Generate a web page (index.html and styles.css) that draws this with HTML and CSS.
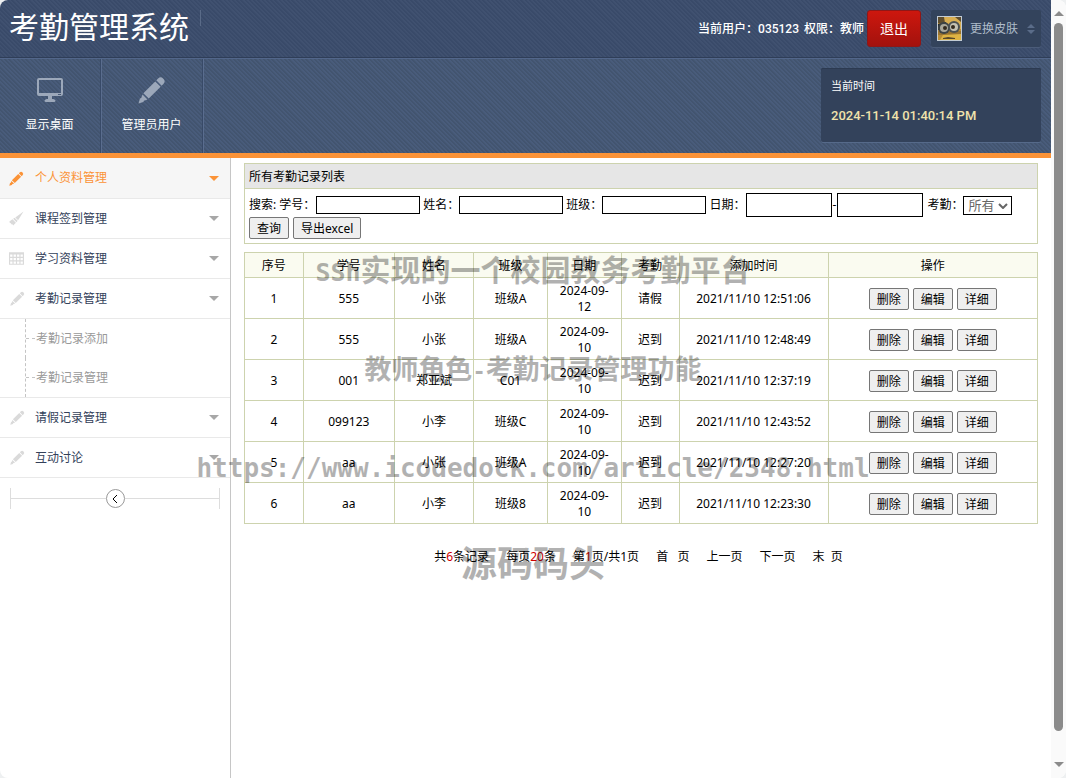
FILE: index.html
```
<!DOCTYPE html>
<html lang="zh-CN">
<head>
<meta charset="utf-8">
<title>考勤管理系统</title>
<link rel="stylesheet" href="styles.css">
</head>
<body>
<svg class="defs" aria-hidden="true">
  <symbol id="pencil" viewBox="0 0 26 26">
    <path d="M18.500 2.500a3 3 0 0 1 5 5l-1.500 1.500-5-5zM16 5l5 5L10 21l-5-5zM4.200 17.200l4.600 4.600-3.300 1.200-.5 1.200-4.500 1.300 1.300-4.500 1.200-.5z"/>
  </symbol>
  <symbol id="brush" viewBox="0 0 16 16">
    <path d="M15.500.5L9.700 9.800 6.700 6.800zM6 7.300l3.200 3.200-1.200 1.400-3.600-3.600zM3.700 8.800l3.700 3.700-3 3-1-1.600-.8.600-.5-1.500-1.200-.2-.5-1.600z"/>
  </symbol>
  <symbol id="grid" viewBox="0 0 13 11">
    <path fill-rule="evenodd" d="M0 0h13v11H0zM1 2v2h2V2zM4 2v2h2V2zM7 2v2h2V2zM10 2v2h2V2zM1 5v2h2V5zM4 5v2h2V5zM7 5v2h2V5zM10 5v2h2V5zM1 8v2h2V8zM4 8v2h2V8zM7 8v2h2V8zM10 8v2h2V8z"/>
  </symbol>
</svg>
<div class="shell">
  <div class="page">
    <header class="topbar">
      <h1 class="brand">考勤管理系统</h1>
      <span class="brand-line"></span>
      <div class="user">
        <span>当前用户：<b>035123</b></span><span>权限：教师</span>
      </div>
      <button class="logout" type="button">退出</button>
      <button class="skin" type="button">
        <svg class="avatar" viewBox="0 0 25 25" aria-hidden="true">
          <rect width="25" height="25" fill="#c3ccd4"/>
          <rect x="1" y="1" width="23" height="23" fill="#b98d36"/>
          <path d="M1 1h23v6H1z" fill="#5e4d2e"/>
          <path d="M7 1h11l6 5v7H9z" fill="#d8ae52"/>
          <path d="M1 8l8-2v8H1z" fill="#242a2c"/>
          <path d="M1 15h23v4H1z" fill="#9a7430"/>
          <circle cx="7" cy="12" r="6" fill="#3d4345"/>
          <circle cx="17" cy="11" r="6" fill="#4b5153"/>
          <circle cx="7" cy="12" r="4" fill="#a9a79a"/>
          <circle cx="17" cy="11" r="4" fill="#c4c1b3"/>
          <circle cx="8" cy="12" r="2" fill="#332b20"/>
          <circle cx="16" cy="11" r="2" fill="#332b20"/>
          <path d="M6 19l18-1v6H3z" fill="#dfb443"/>
          <path d="M6 22l5-1 7 1v1H6z" fill="#58482a"/>
        </svg>
        <span>更换皮肤</span>
        <svg class="updown" viewBox="0 0 8 10" aria-hidden="true"><path d="M4 0l4 4H0zM0 6h8l-4 4z"/></svg>
      </button>
    </header>
    <nav class="mainnav">
      <a class="nav-item" href="#">
        <svg class="nav-icon" viewBox="0 0 28 28" aria-hidden="true"><path fill-rule="evenodd" d="M3 2h22a2 2 0 0 1 2 2v14a2 2 0 0 1-2 2H16v3c2 0 3 .5 3.500 1.500q0 1.500-1.500 1.500H10q-1.500 0-1.500-1.500C9 23.500 10 23 12 23v-3H3a2 2 0 0 1-2-2V4a2 2 0 0 1 2-2zM3 4v13h22V4zM22 18v1h3v-1z"/></svg>
        <span>显示桌面</span>
      </a>
      <a class="nav-item" href="#">
        <svg class="nav-icon" aria-hidden="true"><use href="#pencil"/></svg>
        <span>管理员用户</span>
      </a>
      <div class="clock">
        <span class="clock-label">当前时间</span>
        <time class="clock-time">2024-11-14 01:40:14 PM</time>
      </div>
    </nav>
    <div class="body">
      <aside class="sidebar">
        <a class="menu active" href="#"><svg class="menu-icon" aria-hidden="true"><use href="#pencil"/></svg>个人资料管理<i class="caret"></i></a>
        <a class="menu" href="#"><svg class="menu-icon" aria-hidden="true"><use href="#brush"/></svg>课程签到管理<i class="caret"></i></a>
        <a class="menu" href="#"><svg class="menu-icon" aria-hidden="true"><use href="#grid"/></svg>学习资料管理<i class="caret"></i></a>
        <a class="menu" href="#"><svg class="menu-icon thin" aria-hidden="true"><use href="#pencil"/></svg>考勤记录管理<i class="caret"></i></a>
        <div class="submenu">
          <a class="sub" href="#">考勤记录添加</a>
          <a class="sub" href="#">考勤记录管理</a>
        </div>
        <a class="menu" href="#"><svg class="menu-icon thin" aria-hidden="true"><use href="#pencil"/></svg>请假记录管理<i class="caret"></i></a>
        <a class="menu" href="#"><svg class="menu-icon thin" aria-hidden="true"><use href="#pencil"/></svg>互动讨论<i class="caret"></i></a>
        <div class="fold">
          <span class="fold-line"></span>
          <button class="fold-btn" type="button" aria-label="收起"><svg viewBox="0 0 6 8" aria-hidden="true"><path d="M5 0L1 4l4 4"/></svg></button>
          <span class="fold-line"></span>
        </div>
      </aside>
      <main class="content">
        <section class="panel">
          <h2 class="panel-title">所有考勤记录列表</h2>
          <form class="search">
            <div class="row fields">
              <label for="no">搜索: 学号：</label><input id="no" class="text" type="text">
              <label for="name">姓名：</label><input id="name" class="text" type="text">
              <label for="cls">班级：</label><input id="cls" class="text" type="text">
              <label for="from">日期：</label><span class="range"><input id="from" class="date" type="text"><span>-</span><input class="date" type="text" aria-label="结束日期"></span>
              <label for="state">考勤：</label><span class="pick"><select id="state"><option>所有</option></select><svg viewBox="0 0 10 6" aria-hidden="true"><path d="M1 1l4 4 4-4"/></svg></span>
            </div>
            <div class="row">
              <button class="btn" type="button">查询</button>
              <button class="btn" type="button">导出excel</button>
            </div>
          </form>
        </section>
        <table class="records">
          <colgroup><col class="c1"><col class="c2"><col class="c3"><col class="c4"><col class="c4"><col class="c6"><col class="c7"><col></colgroup>
          <thead><tr><th>序号</th><th>学号</th><th>姓名</th><th>班级</th><th>日期</th><th>考勤</th><th>添加时间</th><th>操作</th></tr></thead>
          <tbody>
            <tr><td>1</td><td>555</td><td>小张</td><td>班级A</td><td>2024-09-12</td><td>请假</td><td>2021/11/10 12:51:06</td><td><div class="ops"><button class="btn" type="button">删除</button><button class="btn" type="button">编辑</button><button class="btn" type="button">详细</button></div></td></tr>
            <tr><td>2</td><td>555</td><td>小张</td><td>班级A</td><td>2024-09-10</td><td>迟到</td><td>2021/11/10 12:48:49</td><td><div class="ops"><button class="btn" type="button">删除</button><button class="btn" type="button">编辑</button><button class="btn" type="button">详细</button></div></td></tr>
            <tr><td>3</td><td>001</td><td>郑亚斌</td><td>C01</td><td>2024-09-10</td><td>迟到</td><td>2021/11/10 12:37:19</td><td><div class="ops"><button class="btn" type="button">删除</button><button class="btn" type="button">编辑</button><button class="btn" type="button">详细</button></div></td></tr>
            <tr><td>4</td><td>099123</td><td>小李</td><td>班级C</td><td>2024-09-10</td><td>迟到</td><td>2021/11/10 12:43:52</td><td><div class="ops"><button class="btn" type="button">删除</button><button class="btn" type="button">编辑</button><button class="btn" type="button">详细</button></div></td></tr>
            <tr><td>5</td><td>aa</td><td>小张</td><td>班级A</td><td>2024-09-10</td><td>迟到</td><td>2021/11/10 12:27:20</td><td><div class="ops"><button class="btn" type="button">删除</button><button class="btn" type="button">编辑</button><button class="btn" type="button">详细</button></div></td></tr>
            <tr><td>6</td><td>aa</td><td>小李</td><td>班级8</td><td>2024-09-10</td><td>迟到</td><td>2021/11/10 12:23:30</td><td><div class="ops"><button class="btn" type="button">删除</button><button class="btn" type="button">编辑</button><button class="btn" type="button">详细</button></div></td></tr>
          </tbody>
        </table>
        <div class="pager">
          <span>共<em>6</em>条记录</span>
          <span>每页<em>20</em>条</span>
          <span>第<em>1</em>页/共1页</span>
          <a href="#">首&nbsp;&nbsp; 页</a>
          <a href="#">上一页</a>
          <a href="#">下一页</a>
          <a href="#">末&nbsp; 页</a>
        </div>
      </main>
    </div>
  </div>
  <div class="scroll" aria-hidden="true"><i class="up"></i><i class="thumb"></i><i class="down"></i></div>
  <div class="watermark">
    <p class="w1"><span>SSh</span>实现的一个校园教务考勤平台</p>
    <p class="w2">教师角色<span>-</span>考勤记录管理功能</p>
    <p class="w3">https://www.icodedock.com/article/2348.html</p>
    <p class="w4">源码码头</p>
  </div>
</div>
</body>
</html>
```
FILE: styles.css
```
* { box-sizing: border-box; }
body {
  margin: 0;
  background: #eef0f1;
  color: #000;
  font: 12px/16px "Noto Sans", "Noto Sans CJK SC", sans-serif;
}
a { color: inherit; text-decoration: none; }
button, input, select { font: inherit; color: inherit; }
.defs { position: absolute; width: 0; height: 0; }

.shell {
  position: relative;
  display: flex;
  min-height: 100vh;
  background: #fff;
  border-radius: 8px;
  overflow: hidden;
}
.page { flex: 1; display: flex; flex-direction: column; min-width: 0; }

/* header */
.topbar {
  display: flex;
  align-items: center;
  height: 58px;
  padding: 0 10px 0 9px;
  color: #fff;
  background: repeating-linear-gradient(45deg, #394a69 0 1px, #405170 2px 3px);
  border-bottom: 1px solid #2f3e58;
}
.brand { margin: 0; padding-bottom: 3px; font-size: 30px; line-height: 40px; font-weight: 400; }
.brand-line { align-self: flex-start; width: 1px; height: 16px; margin: 10px 0 0 11px; background: #5a6b88; }
.user { display: flex; gap: 5px; margin-left: auto; font-weight: 500; font-family: Roboto, "Noto Sans CJK SC", sans-serif; }
.user b { font-weight: 500; }
.logout {
  width: 54px;
  height: 37px;
  margin: 0 10px 0 3px;
  padding: 0;
  font-size: 14px;
  color: #fff;
  background: linear-gradient(#cd170e, #a3120d);
  border: 1px solid #8f1717;
  border-radius: 3px;
}
.skin {
  display: flex;
  align-items: center;
  gap: 8px;
  width: 110px;
  height: 37px;
  padding: 0 6px;
  color: #aebbc9;
  background: #33435c;
  border: 0;
  border-radius: 2px;
  box-shadow: 0 1px 0 #4b5c79;
}
.avatar { width: 25px; height: 25px; }
.updown { width: 8px; height: 10px; margin-left: auto; fill: #5a6c89; }

.mainnav {
  display: flex;
  height: 100px;
  padding-right: 10px;
  color: #fff;
  background: repeating-linear-gradient(45deg, #42546f 0 1px, #495c7b 2px 3px);
  border-top: 1px solid #52668a;
  border-bottom: 5px solid #fb9337;
}
.nav-item {
  display: flex;
  flex-direction: column;
  align-items: center;
  gap: 13px;
  width: 102px;
  padding: 17px 2px 0 0;
  border-right: 1px solid #5a6d8e;
  box-shadow: inset -1px 0 0 #384a68;
}
.nav-icon { width: 28px; height: 28px; fill: #9ca8ba; }
.clock {
  display: flex;
  flex-direction: column;
  gap: 14px;
  width: 220px;
  height: 74px;
  margin: 9px 0 0 auto;
  padding: 10px;
  background: #33425b;
  border-radius: 2px;
  box-shadow: 0 1px 0 #566a8a, inset 0 1px 0 #2c3a51;
}
.clock-label { font-size: 11px; }
.clock-time { font: 500 13px/16px Roboto, sans-serif; color: #f0e3ac; }

/* sidebar */
.body { flex: 1; display: flex; }
.sidebar { flex: none; width: 231px; border-right: 1px solid #c6c6c6; }
.menu {
  display: flex;
  align-items: center;
  height: 40px;
  padding: 0 11px 0 9px;
  color: #33415a;
  border-bottom: 1px solid #e9e9e9;
}
.menu-icon { width: 15px; height: 15px; margin-right: 11px; fill: #dadada; }
.menu-icon.thin { width: 17px; margin-right: 9px; }
.caret { margin-left: auto; border: 5px solid transparent; border-top-color: #a7a7a7; border-bottom: 0; }
.active { color: #fb9337; background: #f6f6f6; height: 41px; }
.active .menu-icon { fill: #fb9337; }
.active .caret { border-top-color: #fb9337; }
.submenu { padding-left: 25px; border-bottom: 1px solid #e9e9e9; }
.sub {
  display: flex;
  align-items: center;
  height: 39px;
  color: #999;
  border-left: 1px dashed #c4c4c4;
}
.sub::before { content: ""; width: 9px; margin-right: 1px; border-top: 1px dashed #c4c4c4; }
.fold {
  display: flex;
  align-items: center;
  height: 21px;
  margin: 10px 10px 0;
  border: solid #ddd;
  border-width: 0 1px;
}
.fold-line { flex: 1; height: 1px; background: #ddd; }
.fold-btn {
  display: flex;
  align-items: center;
  justify-content: center;
  width: 19px;
  height: 19px;
  padding: 0;
  background: #fff;
  border: 1px solid #999;
  border-radius: 50%;
}
.fold-btn svg { width: 6px; height: 8px; fill: none; stroke: #000; }

/* content */
.content { flex: 1; min-width: 0; padding: 5px 13px 0; }
.panel { border: 1px solid #cdd3ae; }
.panel-title {
  margin: 0;
  padding: 5px 4px 3px;
  font-size: 12px;
  line-height: 16px;
  font-weight: 400;
  background: #e6e6e6;
  border-bottom: 1px solid #cdd3ae;
}
.search { padding: 4px; }
.row { display: flex; flex-wrap: wrap; align-items: center; gap: 4px; }
.fields { gap: 0 3px; }
.fields label { margin-right: -3px; }
.fields label:first-child { margin-right: -2px; }
.text { width: 104px; height: 18px; padding: 0 2px; border: 1px solid #000; background: #fff; }
.range { display: flex; align-items: center; margin: 0 1px; }
.range span { width: 5px; }
.date { width: 86px; height: 24px; padding: 0 2px; border: 1px solid #000; background: #fff; }
.pick { position: relative; display: flex; }
.pick select {
  appearance: none;
  width: 49px;
  height: 19px;
  padding: 0 4px;
  font-size: 13px;
  line-height: 17px;
  color: #666;
  background: #fff;
  border: 1px solid #000;
  border-radius: 0;
}
.pick svg { position: absolute; right: 4px; top: 7px; width: 10px; height: 6px; fill: none; stroke: #666; stroke-width: 2; pointer-events: none; }
.btn {
  height: 22px;
  padding: 1px 7px 0;
  line-height: 18px;
  background: #efefef;
  border: 1px solid #767676;
  border-radius: 2px;
}

.records { width: 100%; margin-top: 8px; border-collapse: collapse; table-layout: fixed; text-align: center; }
.records th, .records td { padding: 5px 8px 3px; border: 1px solid #cdd3ae; font-weight: 400; }
.records th { background: #fafbf0; }
.c1 { width: 7.4%; }
.c2 { width: 11.5%; }
.c3 { width: 10%; }
.c4 { width: 9.3%; }
.c6 { width: 7.3%; }
.c7 { width: 18.8%; }
.ops { display: flex; justify-content: center; gap: 4px; }

.pager { display: flex; justify-content: center; gap: 17px; margin-top: 25px; padding-right: 5px; }
.pager em { font-style: normal; color: #d00000; }

/* scroll rail */
.scroll { display: flex; flex-direction: column; align-items: center; flex: none; width: 15px; padding: 11px 0; background: #fafafa; }
.up { border: 5px solid transparent; border-bottom-color: #8b8b8b; border-top: 0; }
.thumb { flex: 1; width: 9px; margin: 7px 0 31px; background: #8b8b8b; border-radius: 5px; }
.down { border: 5px solid transparent; border-top-color: #8b8b8b; border-bottom: 0; }

/* overlay */
.watermark {
  position: absolute;
  inset: 222px 0 auto;
  color: #000;
  opacity: .3;
  font-weight: 700;
  text-align: center;
  white-space: nowrap;
  pointer-events: none;
}
.watermark p { margin: 0; line-height: 96px; }
.watermark span, .w3 { font-family: "DejaVu Sans Mono", monospace; }
.w1 { font-size: 30px; }
.w1 span { font-size: 25px; }
.w2 { font-size: 27px; }
.w2 span { font-size: 22px; }
.w3 { font-size: 26px; }
.w4 { font-size: 36px; }
```
